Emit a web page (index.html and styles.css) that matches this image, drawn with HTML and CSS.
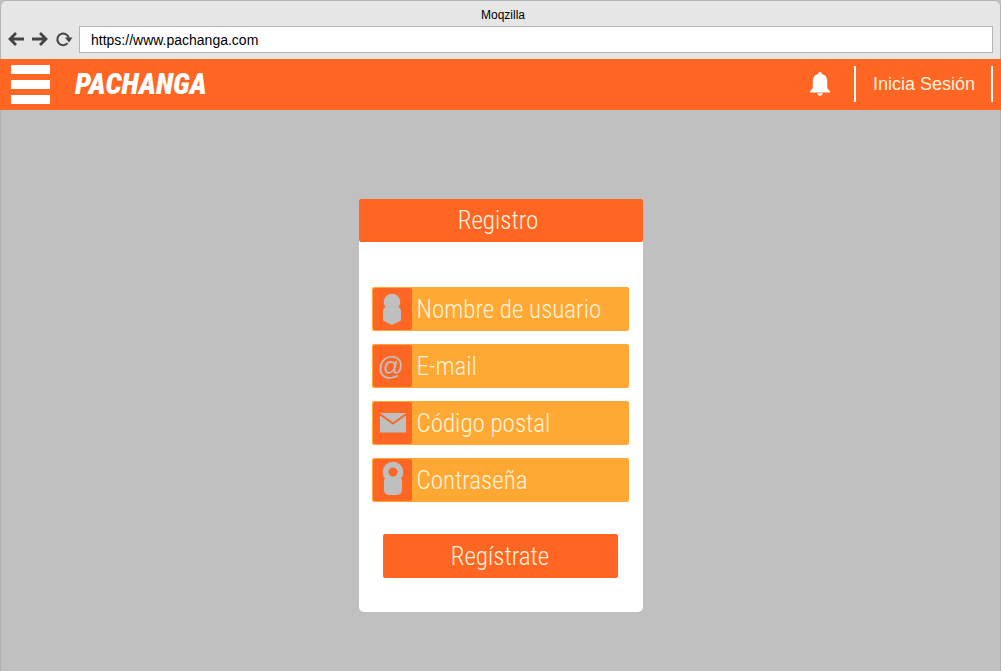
FILE: index.html
```html
<!DOCTYPE html>
<html lang="es">
<head>
<meta charset="utf-8">
<title>Moqzilla</title>
<link rel="stylesheet" href="styles.css">
</head>
<body>
<div class="window">
  <header class="chrome">
    <div class="chrome-title">Moqzilla</div>
    <div class="toolbar">
      <button class="tool" type="button" aria-label="Atrás"><svg width="18" height="18" viewBox="0 0 18 18"><path d="M17 8H3M9 2L3 8l6 6" fill="none" stroke="#444" stroke-width="2.800"/></svg></button>
      <button class="tool" type="button" aria-label="Adelante"><svg width="18" height="18" viewBox="0 0 18 18"><path d="M1 8h14M9 2l6 6-6 6" fill="none" stroke="#444" stroke-width="2.800"/></svg></button>
      <button class="tool" type="button" aria-label="Recargar"><svg width="18" height="18" viewBox="0 0 18 18"><path d="M12.500 12.200A5.800 5.800 0 1 1 13.800 7" fill="none" stroke="#444" stroke-width="2"/><path d="M10 6.500h7.500l-3.500 5z" fill="#444"/></svg></button>
      <input class="address" type="text" value="https://www.pachanga.com" aria-label="Dirección">
    </div>
  </header>
  <nav class="navbar">
    <button class="menu" type="button" aria-label="Menú"><span class="bar"></span><span class="bar"></span><span class="bar"></span></button>
    <a class="brand" href="#">PACHANGA</a>
    <button class="bell" type="button" aria-label="Notificaciones"><svg width="22" height="26" viewBox="0 0 22 26"><path d="M11 1c1.100 0 1.800.8 1.800 1.900C16.500 3.800 18.200 6.500 18.200 10v5.500c0 2 .8 3.300 2.800 4.500v1.500H1V20c2-1.200 2.800-2.500 2.800-4.500V10c0-3.500 1.700-6.200 5.400-7.100C9.200 1.800 9.900 1 11 1z" fill="#fff"/><path d="M8.300 22.300h5.400c-.3 1.700-1.300 2.500-2.700 2.500s-2.400-.8-2.700-2.500z" fill="#fff"/></svg></button>
    <a class="login" href="#">Inicia Sesión</a>
  </nav>
  <main class="page">
    <form class="card">
      <h1 class="card-title">Registro</h1>
      <div class="card-body">
        <div class="field">
          <label class="icon" for="user" aria-label="Nombre de usuario"><svg width="38" height="42" viewBox="0 0 38 42"><circle cx="19" cy="14" r="8.300" fill="#bfbfbf"/><path d="M13 18h12l3 4v10.500l-9 4.500-9-4.500V22z" fill="#bfbfbf"/></svg></label>
          <input class="entry" id="user" type="text" placeholder="Nombre de usuario">
        </div>
        <div class="field">
          <label class="icon at" for="mail" aria-label="E-mail">@</label>
          <input class="entry" id="mail" type="email" placeholder="E-mail">
        </div>
        <div class="field">
          <label class="icon" for="postal" aria-label="Código postal"><svg width="38" height="42" viewBox="0 0 38 42"><path d="M7 11h26v19.500H7z" fill="#bfbfbf"/><path d="M6 11.500l14 10 14-10" fill="none" stroke="#ff6624" stroke-width="2"/></svg></label>
          <input class="entry" id="postal" type="text" placeholder="Código postal">
        </div>
        <div class="field">
          <label class="icon" for="pass" aria-label="Contraseña"><svg width="38" height="42" viewBox="0 0 38 42"><circle cx="20" cy="13" r="10.300" fill="#bfbfbf"/><rect x="11" y="17" width="18" height="19" rx="5" fill="#bfbfbf"/><circle cx="20" cy="13" r="4.500" fill="#ff6624"/></svg></label>
          <input class="entry" id="pass" type="password" placeholder="Contraseña">
        </div>
        <button class="submit" type="submit">Regístrate</button>
      </div>
    </form>
  </main>
</div>
</body>
</html>
```
FILE: styles.css
```css
* { box-sizing: border-box; }
body { margin: 0; background: #c0c0c0; font-family: "Liberation Sans", Arial, sans-serif; }
button { margin: 0; padding: 0; border: 0; background: none; cursor: pointer; }
svg { display: block; }
.window { min-height: 100vh; display: flex; flex-direction: column; }
.chrome {
  padding: 6px 7px 6px 6px;
  background: #e6e6e6;
  border: 1px solid #b4b4b4;
  border-bottom: 0;
  border-radius: 6px 6px 0 0;
}
.chrome-title { padding-left: 6px; font-size: 12px; line-height: 16px; text-align: center; }
.toolbar { display: flex; align-items: center; gap: 6px; padding-top: 3px; }
.address {
  flex: 1;
  min-width: 0;
  height: 27px;
  padding: 0 11px;
  border: 1px solid #b4b4b4;
  background: #fff;
  color: #000;
  font: 14px "Liberation Sans", Arial, sans-serif;
}
.navbar { display: flex; align-items: center; height: 51px; padding: 0 8px 1px 11px; background: #ff6624; }
.menu { display: flex; flex-direction: column; gap: 6px; width: 39px; }
.bar { height: 9px; background: #fff; }
.brand {
  margin-left: 25px;
  color: #fff;
  font: italic 900 29px "Roboto Condensed", Roboto, sans-serif;
  text-decoration: none;
}
.bell { margin-left: auto; margin-right: 23px; }
.login {
  padding: 0 16px 0 17px;
  border: solid #fff;
  border-width: 0 2px;
  color: #fff3dc;
  font-size: 18px;
  line-height: 36px;
  text-decoration: none;
}
.page {
  flex: 1;
  display: flex;
  justify-content: center;
  align-items: flex-start;
  padding: 89px 16px 59px;
  border: solid #b0b0b0;
  border-width: 0 1px;
}
.card {
  width: 284px;
  border-radius: 2px 2px 5px 5px;
  background: #fff;
  color: #fff3dc;
  font-family: "Roboto Condensed", Roboto, sans-serif;
  font-size: 25px;
  font-weight: 300;
}
.card-title {
  margin: 0;
  padding-right: 5px;
  border-radius: 2px;
  background: #ff6624;
  font: inherit;
  line-height: 43px;
  text-align: center;
}
.card-body { display: flex; flex-direction: column; gap: 13px; padding: 45px 14px 34px 13px; }
.field { display: flex; height: 44px; padding: 1px; border-radius: 2px; background: #ffa834; }
.icon { flex: none; width: 39px; background: #ff6624; border-radius: 2px; }
.at { padding-right: 2px; color: #bfbfbf; font: 26px/42px "Liberation Sans", Arial, sans-serif; text-align: center; }
.entry { flex: 1; min-width: 0; padding: 0 5px; border: 0; background: none; color: #fff3dc; font: inherit; }
.entry::placeholder { color: #fff3dc; opacity: 1; }
.submit {
  height: 44px;
  margin: 19px 11px 0;
  border-radius: 2px;
  background: #ff6624;
  color: #fff3dc;
  font: inherit;
}
```
